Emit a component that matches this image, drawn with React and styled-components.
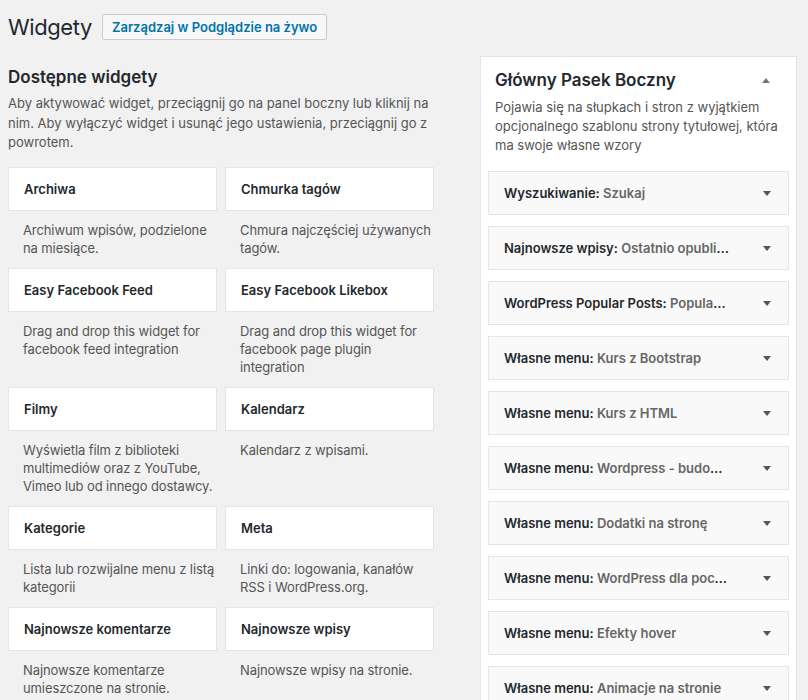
import React from 'react';
import styled, { createGlobalStyle } from 'styled-components';

const GlobalStyle = createGlobalStyle`
  html, body {
    margin: 0;
    padding: 0;
    background: #f1f1f1;
  }
  body {
    font-family: Inter, "Noto Sans", "Liberation Sans", sans-serif;
    color: #23282d;
    font-size: 13px;
  }
`;

const Page = styled.div`
  padding: 14px 0 0 8px;
`;

const Header = styled.div`
  display: flex;
  align-items: center;
  gap: 10px;
  height: 26px;
`;

const PageTitle = styled.h1`
  margin: 0;
  font-size: 22px;
  font-weight: 400;
  letter-spacing: -0.4px;
  line-height: 26px;
  color: #23282d;
`;

const ActionButton = styled.a`
  display: inline-flex;
  align-items: center;
  height: 24px;
  padding: 0 9px;
  border: 1px solid #ccc;
  border-radius: 2px;
  background: #f7f7f7;
  color: #0073aa;
  font-size: 13px;
  font-weight: 600;
  text-decoration: none;
`;

const Columns = styled.div`
  display: flex;
  align-items: flex-start;
  gap: 46px;
`;

const LeftColumn = styled.div`
  width: 426px;
  flex-shrink: 0;
`;

const SectionTitle = styled.h2`
  margin: 26px 0 6px;
  font-size: 17px;
  font-weight: 600;
  line-height: 22px;
`;

const SectionText = styled.p`
  margin: 0 0 14px;
  line-height: 19.5px;
  color: #555;
`;

const WidgetGrid = styled.div`
  display: grid;
  grid-template-columns: 209px 209px;
  column-gap: 8px;
`;

const WidgetCell = styled.div`
  display: flex;
  flex-direction: column;
`;

const WidgetCard = styled.div`
  height: 42px;
  display: flex;
  align-items: center;
  padding: 0 15px;
  background: #fff;
  border: 1px solid #e5e5e5;
  font-weight: 600;
  font-size: 13px;
  color: #23282d;
`;

const WidgetDesc = styled.div`
  padding: 10px 2px 11px 15px;
  line-height: 18px;
  letter-spacing: -0.1px;
  color: #555;
`;

const SidebarPanel = styled.div`
  width: 301px;
  flex-shrink: 0;
  margin-top: 16px;
  padding: 12px 7px 0;
  background: #fff;
  border: 1px solid #e5e5e5;
`;

const PanelHead = styled.div`
  display: flex;
  align-items: center;
  justify-content: space-between;
  padding: 0 19px 0 7px;
`;

const PanelTitle = styled.h2`
  margin: 0;
  font-size: 17px;
  font-weight: 600;
  line-height: 22px;
`;

const PanelText = styled.p`
  margin: 7px 0 16px;
  padding: 0 7px;
  line-height: 19px;
  color: #555;
`;

const SidebarWidget = styled.div`
  height: 42px;
  display: flex;
  align-items: center;
  justify-content: space-between;
  margin-bottom: 11px;
  padding: 0 17px 0 15px;
  background: #f9f9f9;
  border: 1px solid #e5e5e5;
`;

const SidebarWidgetTitle = styled.div`
  max-width: 226px;
  overflow: hidden;
  white-space: nowrap;
  text-overflow: ellipsis;
  font-weight: 600;
  color: #23282d;
`;

const InTitle = styled.span`
  color: #666;
`;

const Arrow = ({ up }) => (
  <svg width="8" height="5" viewBox="0 0 8 5">
    <path d={up ? 'M0 5 L4 0 L8 5 Z' : 'M0 0 L8 0 L4 5 Z'} fill={up ? '#72777c' : '#555'} />
  </svg>
);

const widgets = [
  ['Archiwa', 'Archiwum wpisów, podzielone na miesiące.'],
  ['Chmurka tagów', 'Chmura najczęściej używanych tagów.'],
  ['Easy Facebook Feed', 'Drag and drop this widget for facebook feed integration'],
  ['Easy Facebook Likebox', 'Drag and drop this widget for facebook page plugin integration'],
  ['Filmy', 'Wyświetla film z biblioteki multimediów oraz z YouTube, Vimeo lub od innego dostawcy.'],
  ['Kalendarz', 'Kalendarz z wpisami.'],
  ['Kategorie', 'Lista lub rozwijalne menu z listą kategorii'],
  ['Meta', 'Linki do: logowania, kanałów RSS i WordPress.org.'],
  ['Najnowsze komentarze', 'Najnowsze komentarze umieszczone na stronie.'],
  ['Najnowsze wpisy', 'Najnowsze wpisy na stronie.'],
];

const sidebarWidgets = [
  ['Wyszukiwanie', 'Szukaj'],
  ['Najnowsze wpisy', 'Ostatnio opublikowane'],
  ['WordPress Popular Posts', 'Popularne wpisy'],
  ['Własne menu', 'Kurs z Bootstrap'],
  ['Własne menu', 'Kurs z HTML'],
  ['Własne menu', 'Wordpress - budowa strony'],
  ['Własne menu', 'Dodatki na stronę'],
  ['Własne menu', 'WordPress dla początkujących'],
  ['Własne menu', 'Efekty hover'],
  ['Własne menu', 'Animacje na stronie'],
  ['Własne menu', 'Formularze'],
];

export default function App() {
  return (
    <>
      <GlobalStyle />
      <Page>
        <Header>
          <PageTitle>Widgety</PageTitle>
          <ActionButton href="#">Zarządzaj w Podglądzie na żywo</ActionButton>
        </Header>
        <Columns>
          <LeftColumn>
            <SectionTitle>Dostępne widgety</SectionTitle>
            <SectionText>
              Aby aktywować widget, przeciągnij go na panel boczny lub kliknij na nim. Aby wyłączyć
              widget i usunąć jego ustawienia, przeciągnij go z powrotem.
            </SectionText>
            <WidgetGrid>
              {widgets.map(([name, desc]) => (
                <WidgetCell key={name}>
                  <WidgetCard>{name}</WidgetCard>
                  <WidgetDesc>{desc}</WidgetDesc>
                </WidgetCell>
              ))}
            </WidgetGrid>
          </LeftColumn>
          <SidebarPanel>
            <PanelHead>
              <PanelTitle>Główny Pasek Boczny</PanelTitle>
              <Arrow up />
            </PanelHead>
            <PanelText>
              Pojawia się na słupkach i stron z wyjątkiem opcjonalnego szablonu strony tytułowej,
              która ma swoje własne wzory
            </PanelText>
            {sidebarWidgets.map(([name, title], i) => (
              <SidebarWidget key={i}>
                <SidebarWidgetTitle>
                  {name}: <InTitle>{title}</InTitle>
                </SidebarWidgetTitle>
                <Arrow />
              </SidebarWidget>
            ))}
          </SidebarPanel>
        </Columns>
      </Page>
    </>
  );
}
